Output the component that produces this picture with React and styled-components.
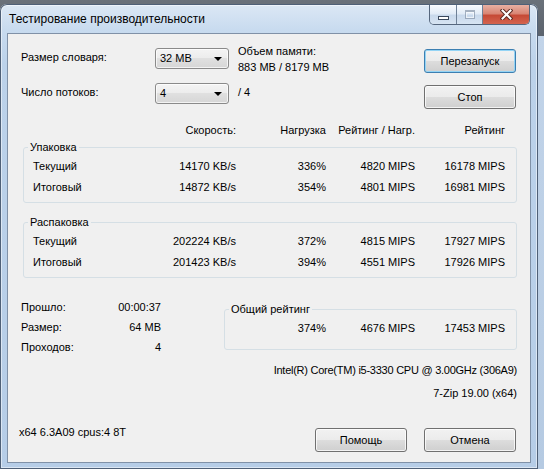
import { Fragment } from "react";
import styled, { createGlobalStyle } from "styled-components";

const GlobalStyle = createGlobalStyle`
  html, body {
    margin: 0;
    padding: 0;
  }
  body {
    background: #5a626c;
    font-family: "Liberation Sans", Arial, sans-serif;
    font-size: 11px;
    color: #000;
  }
`;

const Desktop = styled.div`
  width: 544px;
  height: 469px;
  overflow: hidden;
  box-sizing: border-box;
  padding-top: 4px;
  background: linear-gradient(180deg, #6a717a 0px, #5b636d 36px, #c2d4e9 36px, #b5cae2 100%);
`;

const Window = styled.div`
  width: 538px;
  height: 465px;
  box-sizing: border-box;
  display: flex;
  flex-direction: column;
  padding: 0 7px 6px 7px;
  border-radius: 7px 7px 0 0;
  background: linear-gradient(180deg, #dce8f5 0%, #c8dbef 26px, #bcd2ea 60px, #b6cde7 100%);
  box-shadow: inset 0 0 0 1px #4f6077, inset 0 0 0 2px rgba(255, 255, 255, 0.5);
`;

const TitleBar = styled.div`
  height: 29px;
  flex-shrink: 0;
  display: flex;
  align-items: flex-start;
  justify-content: space-between;
`;

const Title = styled.div`
  font-family: "Liberation Sans", Arial, sans-serif;
  font-size: 12px;
  line-height: 17px;
  margin: 7px 0 0 2px;
  color: #000;
`;

const Caption = styled.div`
  display: flex;
  height: 19px;
  margin: 1px 1px 0 0;
  border: 1px solid #56677e;
  border-top: none;
  border-radius: 0 0 5px 5px;
  overflow: hidden;
`;

const CaptionButton = styled.div`
  width: ${(p) => p.$w}px;
  display: flex;
  align-items: center;
  justify-content: center;
  background: ${(p) =>
    p.$close
      ? "linear-gradient(180deg, #e8b0a2 0%, #d98675 45%, #c64a36 55%, #d4644f 100%)"
      : "linear-gradient(180deg, rgba(255,255,255,0.8) 0%, rgba(232,240,249,0.7) 45%, rgba(196,213,233,0.7) 55%, rgba(218,230,243,0.8) 100%)"};
  & + & {
    border-left: 1px solid #6f8197;
  }
`;

const MinGlyph = styled.div`
  width: 9px;
  height: 2px;
  margin-top: 6px;
  background: #fff;
  border: 1px solid #3b4a5e;
`;

const MaxGlyph = styled.div`
  width: 8px;
  height: 6px;
  border: 1px solid rgba(120, 135, 155, 0.6);
  border-top-width: 2px;
  box-shadow: inset 0 0 0 1px rgba(255, 255, 255, 0.6);
`;

const Client = styled.div`
  flex: 1;
  display: flex;
  flex-direction: column;
  background: #f0f0f0;
  border: 1px solid #8091a7;
`;

const Settings = styled.div`
  display: grid;
  grid-template-columns: 134px 83px 186px 92px;
  grid-template-rows: 35px 26px;
  padding: 14px 0 0 13px;
`;

const Label = styled.div`
  line-height: 13px;
  margin-top: 3px;
  white-space: nowrap;
`;

const Memory = styled.div`
  line-height: 16px;
  margin-top: -5px;
  white-space: nowrap;
`;

const Combo = styled.div`
  position: relative;
  width: 74px;
  height: 21px;
  box-sizing: border-box;
  padding-left: 4px;
  line-height: 19px;
  border: 1px solid #8a8a8a;
  border-radius: 3px;
  background: linear-gradient(180deg, #f4f4f4 0%, #ececec 50%, #e0e0e0 50%, #d6d6d6 100%);
  box-shadow: inset 0 0 0 1px rgba(255, 255, 255, 0.7);

  &::after {
    content: "";
    position: absolute;
    right: 6px;
    top: 8px;
    border-left: 4px solid transparent;
    border-right: 4px solid transparent;
    border-top: 4px solid #000;
  }
`;

const Button = styled.button`
  width: 92px;
  height: 24px;
  margin-top: ${(p) => p.$top || 0}px;
  padding: 0;
  font-family: "Liberation Sans", Arial, sans-serif;
  font-size: 11px;
  color: #000;
  border: 1px solid ${(p) => (p.$default ? "#3c7fb1" : "#707070")};
  border-radius: 3px;
  background: linear-gradient(180deg, #f2f2f2 0%, #ebebeb 50%, #dddddd 50%, #cfcfcf 100%);
  box-shadow: inset 0 0 0 1px ${(p) => (p.$default ? "#94d4f5" : "rgba(255,255,255,0.75)")};
`;

const Columns = styled.div`
  display: grid;
  grid-template-columns: 113px 90px 90px 89px 90px;
`;

const HeaderRow = styled(Columns)`
  margin-top: 15px;
  padding-left: 25px;
  line-height: 13px;
`;

const DataRow = styled(Columns)`
  line-height: 21px;
`;

const Cell = styled.div`
  white-space: nowrap;
  text-align: ${(p) => (p.$left ? "left" : "right")};
`;

const Group = styled.div`
  position: relative;
  margin: ${(p) => p.$top}px 13px 0 15px;
  padding: 8px 0 4px 9px;
  border: 1px solid #d5dfe5;
  border-radius: 3px;
`;

const GroupTitle = styled.span`
  position: absolute;
  top: -7px;
  left: 4px;
  padding: 0 2px;
  line-height: 13px;
  background: #f0f0f0;
  white-space: nowrap;
`;

const Summary = styled.div`
  display: flex;
  justify-content: space-between;
  align-items: flex-start;
  margin-top: 19px;
  padding: 0 13px;
`;

const Stats = styled.div`
  width: 140px;
  display: grid;
  grid-template-columns: 1fr auto;
  line-height: 20px;
`;

const TotalBox = styled.div`
  position: relative;
  width: 293px;
  box-sizing: border-box;
  margin-top: 12px;
  padding: 8px 11px 11px 0;
  border: 1px solid #d5dfe5;
  border-radius: 3px;
  display: grid;
  grid-template-columns: 1fr 90px 89px 90px;
  line-height: 20px;
`;

const InfoLine = styled.div`
  margin-top: ${(p) => p.$top}px;
  padding-right: 13px;
  text-align: right;
  line-height: 13px;
  white-space: nowrap;
  letter-spacing: ${(p) => p.$tight || 0}px;
`;

const Footer = styled.div`
  display: flex;
  align-items: flex-start;
  gap: 17px;
  margin-top: 28px;
  padding: 0 14px 0 11px;
`;

const Version = styled.div`
  flex: 1;
  margin-top: -2px;
  line-height: 13px;
`;

const packRows = [
  ["Текущий", "14170 KB/s", "336%", "4820 MIPS", "16178 MIPS"],
  ["Итоговый", "14872 KB/s", "354%", "4801 MIPS", "16981 MIPS"],
];

const unpackRows = [
  ["Текущий", "202224 KB/s", "372%", "4815 MIPS", "17927 MIPS"],
  ["Итоговый", "201423 KB/s", "394%", "4551 MIPS", "17926 MIPS"],
];

const stats = [
  ["Прошло:", "00:00:37"],
  ["Размер:", "64 MB"],
  ["Проходов:", "4"],
];

const CloseGlyph = () => (
  <svg width="13" height="11" viewBox="0 0 13 11">
    <path d="M2.5 1.5 L10.5 9.5 M10.5 1.5 L2.5 9.5" stroke="#5a2a22" strokeWidth="4" strokeLinecap="square" />
    <path d="M2.5 1.5 L10.5 9.5 M10.5 1.5 L2.5 9.5" stroke="#fff" strokeWidth="2" strokeLinecap="square" />
  </svg>
);

const ResultGroup = ({ title, rows, top }) => (
  <Group $top={top}>
    <GroupTitle>{title}</GroupTitle>
    {rows.map((r) => (
      <DataRow key={r[0]}>
        {r.map((v, i) => (
          <Cell key={i} $left={i === 0}>
            {v}
          </Cell>
        ))}
      </DataRow>
    ))}
  </Group>
);

export default function App() {
  return (
    <>
      <GlobalStyle />
      <Desktop>
        <Window>
          <TitleBar>
            <Title>Тестирование производительности</Title>
            <Caption>
              <CaptionButton $w={26}>
                <MinGlyph />
              </CaptionButton>
              <CaptionButton $w={25}>
                <MaxGlyph />
              </CaptionButton>
              <CaptionButton $w={46} $close>
                <CloseGlyph />
              </CaptionButton>
            </Caption>
          </TitleBar>

          <Client>
            <Settings>
              <Label>Размер словаря:</Label>
              <Combo>32 MB</Combo>
              <Memory>
                Объем памяти:
                <br />
                883 MB / 8179 MB
              </Memory>
              <Button $default $top={1}>Перезапуск</Button>

              <Label>Число потоков:</Label>
              <Combo>4</Combo>
              <Label>/ 4</Label>
              <Button $top={2}>Стоп</Button>
            </Settings>

            <HeaderRow>
              <Cell $left />
              <Cell>Скорость:</Cell>
              <Cell>Нагрузка</Cell>
              <Cell>Рейтинг / Нагр.</Cell>
              <Cell>Рейтинг</Cell>
            </HeaderRow>

            <ResultGroup title="Упаковка" rows={packRows} top={10} />
            <ResultGroup title="Распаковка" rows={unpackRows} top={19} />

            <Summary>
              <Stats>
                {stats.map(([k, v]) => (
                  <Fragment key={k}>
                    <Cell $left>{k}</Cell>
                    <Cell>{v}</Cell>
                  </Fragment>
                ))}
              </Stats>
              <TotalBox>
                <GroupTitle>Общий рейтинг</GroupTitle>
                <Cell />
                <Cell>374%</Cell>
                <Cell>4676 MIPS</Cell>
                <Cell>17453 MIPS</Cell>
              </TotalBox>
            </Summary>

            <InfoLine $top={7} $tight={-0.25}>
              Intel(R) Core(TM) i5-3330 CPU @ 3.00GHz (306A9)
            </InfoLine>
            <InfoLine $top={10}>7-Zip 19.00 (x64)</InfoLine>

            <Footer>
              <Version>x64 6.3A09 cpus:4 8T</Version>
              <Button>Помощь</Button>
              <Button>Отмена</Button>
            </Footer>
          </Client>
        </Window>
      </Desktop>
    </>
  );
}
